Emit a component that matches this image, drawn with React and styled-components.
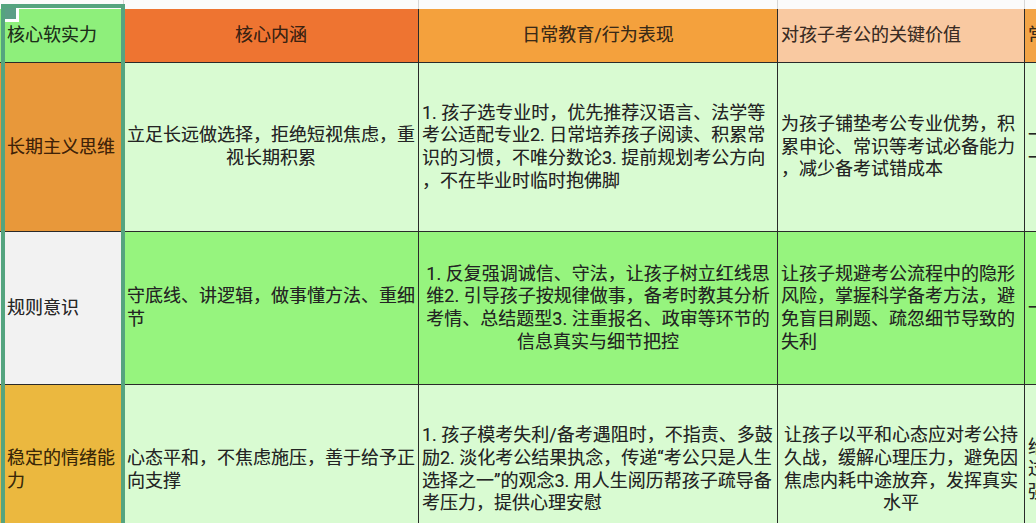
import React from "react";
import styled, { createGlobalStyle } from "styled-components";

const GlobalStyle = createGlobalStyle`
  html, body {
    margin: 0;
    padding: 0;
    background: #ffffff;
    overflow: hidden;
  }
  body {
    font-family: Roboto, "Noto Sans CJK SC", sans-serif;
  }
`;

const COLS = [124, 295, 359, 247, 240];

const Page = styled.div`
  position: relative;
  width: 1036px;
  height: 523px;
  overflow: hidden;
  background: #fdfdfd;
`;

const Ruler = styled.div`
  display: grid;
  grid-template-columns: ${COLS.map((c) => c + "px").join(" ")};
  height: 9px;
  background: #fbfbfb;
`;

const RulerCell = styled.div`
  border-right: 1px solid #d6d6d6;
`;

const Table = styled.div`
  display: grid;
  grid-template-columns: ${COLS.map((c) => c + "px").join(" ")};
  grid-template-rows: 54px 169px 153px 170px;
`;

const Cell = styled.div`
  box-sizing: border-box;
  display: flex;
  flex-direction: column;
  justify-content: center;
  padding: ${(p) => (p.$first ? "0 2px 0 7px" : "0 3px")};
  background: ${(p) => p.$bg};
  color: ${(p) => p.$color || "#242424"};
  text-align: ${(p) => p.$align || "left"};
  border-right: 1px solid #2a2a2a;
  border-bottom: 1px solid #2a2a2a;
  font-family: Roboto, "Noto Sans CJK SC", sans-serif;
  font-size: 18px;
  line-height: 22.6px;
  white-space: nowrap;
  overflow: hidden;
  text-shadow: 0 0 0.6px rgba(0, 0, 0, 0.35);
`;

const Line = styled.span`
  display: block;
`;

const SelectionFrame = styled.div`
  position: absolute;
  left: 1px;
  top: 4px;
  width: 124px;
  height: 560px;
  box-sizing: border-box;
  border: 4px solid #55a47f;
  pointer-events: none;
`;

const FillHandle = styled.div`
  position: absolute;
  left: 5px;
  top: 8px;
  width: 14px;
  height: 14px;
  box-sizing: border-box;
  background: #5c9e86;
  border-right: 3px solid #ffffff;
  border-bottom: 3px solid #ffffff;
`;

const header = [
  { lines: ["核心软实力"], bg: "#8eef7b", color: "#1d2e1a", align: "left" },
  { lines: ["核心内涵"], bg: "#ee7431", color: "#3a2212", align: "center" },
  { lines: ["日常教育/行为表现"], bg: "#f4a13d", color: "#3a2a18", align: "center" },
  { lines: ["对孩子考公的关键价值"], bg: "#f9c9a1", color: "#3a2c24", align: "left" },
  { lines: ["常见误区"], bg: "#f3a446", color: "#3a2a18", align: "left" },
];

const rows = [
  {
    bg: "#d9fbd2",
    head: { lines: ["长期主义思维"], bg: "#e8983a", color: "#3f2208" },
    cells: [
      { lines: ["立足长远做选择，拒绝短视焦虑，重", "视长期积累"], align: "center" },
      {
        lines: [
          "1. 孩子选专业时，优先推荐汉语言、法学等",
          "考公适配专业2. 日常培养孩子阅读、积累常",
          "识的习惯，不唯分数论3. 提前规划考公方向",
          "，不在毕业时临时抱佛脚",
        ],
        align: "left",
      },
      {
        lines: ["为孩子铺垫考公专业优势，积", "累申论、常识等考试必备能力", "，减少备考试错成本"],
        align: "left",
      },
      { lines: ["一味追求", "一时成绩"], align: "left" },
    ],
  },
  {
    bg: "#96f47e",
    head: { lines: ["规则意识"], bg: "#f2f2f2", color: "#262626" },
    cells: [
      { lines: ["守底线、讲逻辑，做事懂方法、重细", "节"], align: "left" },
      {
        lines: [
          "1. 反复强调诚信、守法，让孩子树立红线思",
          "维2. 引导孩子按规律做事，备考时教其分析",
          "考情、总结题型3. 注重报名、政审等环节的",
          "信息真实与细节把控",
        ],
        align: "center",
      },
      {
        lines: ["让孩子规避考公流程中的隐形", "风险，掌握科学备考方法，避", "免盲目刷题、疏忽细节导致的", "失利"],
        align: "left",
      },
      { lines: ["一味死记"], align: "left" },
    ],
  },
  {
    bg: "#d9fbd2",
    head: { lines: ["稳定的情绪能", "力"], bg: "#ebb83f", color: "#3a2808" },
    cells: [
      { lines: ["心态平和，不焦虑施压，善于给予正", "向支撑"], align: "left" },
      {
        lines: [
          "1. 孩子模考失利/备考遇阻时，不指责、多鼓",
          "励2. 淡化考公结果执念，传递“考公只是人生",
          "选择之一”的观念3. 用人生阅历帮孩子疏导备",
          "考压力，提供心理安慰",
        ],
        align: "left",
      },
      {
        lines: ["让孩子以平和心态应对考公持", "久战，缓解心理压力，避免因", "焦虑内耗中途放弃，发挥真实", "水平"],
        align: "center",
      },
      { lines: ["给孩子施压", "过度焦虑", "强行干预"], align: "left" },
    ],
  },
];

const Lines = ({ lines }) => lines.map((l, i) => <Line key={i}>{l}</Line>);

export default function App() {
  return (
    <>
      <GlobalStyle />
      <Page>
        <Ruler>
          {COLS.map((_, i) => (
            <RulerCell key={i} />
          ))}
        </Ruler>
        <Table>
          {header.map((h, i) => (
            <Cell key={"h" + i} $first={i === 0} $bg={h.bg} $color={h.color} $align={h.align}>
              <Lines lines={h.lines} />
            </Cell>
          ))}
          {rows.map((r, ri) => (
            <React.Fragment key={ri}>
              <Cell $first $bg={r.head.bg} $color={r.head.color}>
                <Lines lines={r.head.lines} />
              </Cell>
              {r.cells.map((c, ci) => (
                <Cell key={ci} $bg={r.bg} $align={c.align}>
                  <Lines lines={c.lines} />
                </Cell>
              ))}
            </React.Fragment>
          ))}
        </Table>
        <SelectionFrame />
        <FillHandle />
      </Page>
    </>
  );
}
